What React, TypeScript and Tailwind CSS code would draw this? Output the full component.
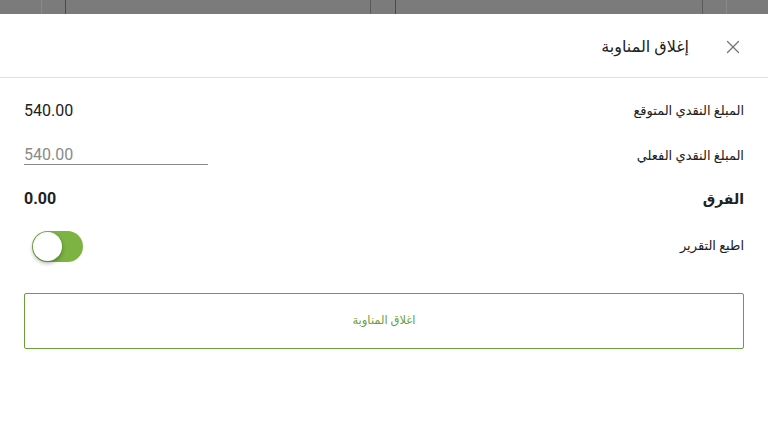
import { X } from 'lucide-react';

const FONT = "font-['Roboto','DejaVu_Sans',sans-serif]";

export default function App() {
  return (
    <div className={`w-[768px] h-[434px] bg-white overflow-hidden flex flex-col ${FONT}`}>
      {/* dimmed page behind the sheet */}
      <div className="h-[14px] bg-[#7b7b7b] flex shrink-0">
        <div className="w-[42px] border-r border-[#8a8a8a]" />
        <div className="w-[24px] border-r border-[#3d5a1e]" />
        <div className="w-[305px] border-r border-[#5a5a5a]" />
        <div className="w-[25px] border-r border-[#3d5a1e]" />
        <div className="w-[307px] border-r border-[#5a5a5a]" />
        <div className="w-[24px] border-r border-[#8a8a8a]" />
        <div className="flex-1" />
      </div>

      <div dir="rtl" className="flex flex-col flex-1">
        <div className="h-[64px] flex items-center border-b border-[#e0e0e0] pr-[24px] pt-[3px] gap-[33px]">
          <X className="w-[22px] h-[22px] text-[#757575]" strokeWidth={1.4} />
          <span className="text-[16px] text-[#212121]">إغلاق المناوبة</span>
        </div>

        <div className="px-[24px] pt-[22px] flex flex-col">
          <div className="flex justify-between items-center h-[22px]">
            <span className="text-[13px] text-[#212121]">المبلغ النقدي المتوقع</span>
            <span className="text-[16px] text-[#212121]">540.00</span>
          </div>
          <div className="flex justify-between items-end h-[22px] mt-[21px]">
            <span className="text-[13px] text-[#212121]">المبلغ النقدي الفعلي</span>
            <div className="w-[184px] border-b border-[#8a8a8a] text-left" dir="ltr">
              <span className="block text-[16px] text-[#8a8a8a] leading-[18px] pt-[2px]">540.00</span>
            </div>
          </div>
          <div className="flex justify-between items-center h-[22px] mt-[23px]">
            <span className="text-[14px] font-bold text-[#212121]">الفرق</span>
            <span className="text-[16px] font-bold text-[#212121]">0.00</span>
          </div>
          <div className="flex justify-between items-center h-[32px] mt-[20px]">
            <span className="text-[13px] text-[#212121]">اطبع التقرير</span>
            <div className="w-[51px] h-[31px] rounded-full bg-[#7cb342] relative ml-[8px]">
              <div className="absolute left-[1px] top-[1px] w-[29px] h-[29px] rounded-full bg-white shadow-[0_2px_4px_rgba(0,0,0,0.35)]" />
            </div>
          </div>

          <button className="mt-[31px] h-[56px] border border-[#6a9f3a] rounded-[2px] flex items-center justify-center text-[11.5px] text-[#6a9f3a]">
            اغلاق المناوبة
          </button>
        </div>
      </div>
    </div>
  );
}
